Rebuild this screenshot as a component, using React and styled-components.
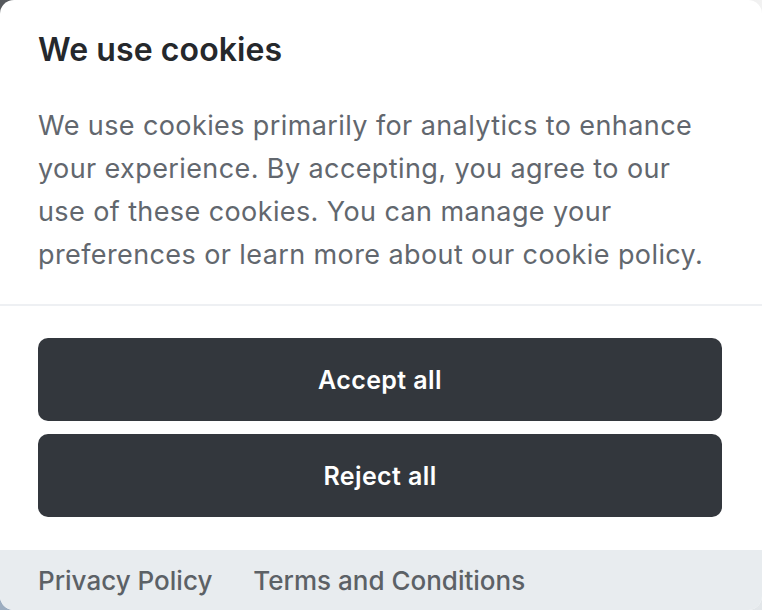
import React from 'react';
import styled, { createGlobalStyle } from 'styled-components';

const GlobalStyle = createGlobalStyle`
  html, body {
    margin: 0;
    padding: 0;
    width: 762px;
    height: 610px;
    overflow: hidden;
  }
  body {
    /* backdrop peeking out at the rounded corners */
    background:
      linear-gradient(to right, #55585c, #f2f2f2) top / 100% 50% no-repeat,
      linear-gradient(to right, #9cadc0, #e3e7ea) bottom / 100% 50% no-repeat;
    font-family: Inter, "Noto Sans", "Liberation Sans", sans-serif;
  }
`;

const Dialog = styled.div`
  width: 762px;
  height: 610px;
  background: #ffffff;
  border-radius: 14px;
  overflow: hidden;
  display: flex;
  flex-direction: column;
`;

const Body = styled.div`
  padding: 31px 38px 28px;
  border-bottom: 2px solid #eef0f3;
`;

const Title = styled.h2`
  margin: 0;
  font-size: 32px;
  line-height: 38px;
  font-weight: 600;
  color: #25282c;
  letter-spacing: 0.1px;
`;

const Text = styled.p`
  margin: 35px 0 0;
  font-size: 27px;
  line-height: 43px;
  font-weight: 400;
  color: #62676e;
  letter-spacing: 0.4px;
`;

const Actions = styled.div`
  display: flex;
  flex-direction: column;
  gap: 13px;
  padding: 32px 40px 33px 38px;
`;

const Button = styled.button`
  height: 83px;
  border: none;
  border-radius: 10px;
  background: #33373d;
  color: #ffffff;
  font-family: inherit;
  font-size: 25px;
  font-weight: 600;
  letter-spacing: 0.4px;
  cursor: pointer;
`;

const Footer = styled.div`
  flex: 1;
  display: flex;
  gap: 41px;
  padding: 12px 38px 0;
  background: #e8ecef;
`;

const FooterLink = styled.a`
  font-size: 26px;
  line-height: 38px;
  font-weight: 500;
  color: #5c6166;
  text-decoration: none;
`;

export default function App() {
  return (
    <>
      <GlobalStyle />
      <Dialog>
        <Body>
          <Title>We use cookies</Title>
          <Text>
            We use cookies primarily for analytics to enhance your experience. By
            accepting, you agree to our use of these cookies. You can manage your
            preferences or learn more about our cookie policy.
          </Text>
        </Body>
        <Actions>
          <Button>Accept all</Button>
          <Button>Reject all</Button>
        </Actions>
        <Footer>
          <FooterLink href="#">Privacy Policy</FooterLink>
          <FooterLink href="#">Terms and Conditions</FooterLink>
        </Footer>
      </Dialog>
    </>
  );
}
